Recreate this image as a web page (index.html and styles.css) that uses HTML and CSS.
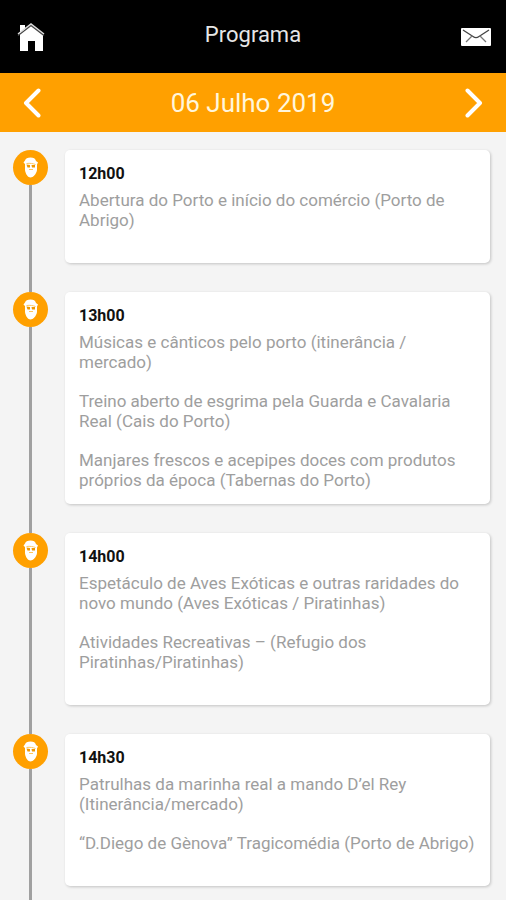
FILE: index.html
```html
<!DOCTYPE html>
<html lang="pt">
<head>
  <meta charset="UTF-8">
  <meta name="viewport" content="width=device-width, initial-scale=1.0">
  <title>Programa</title>
  <link rel="stylesheet" href="styles.css">
</head>
<body>

  <!-- head icon shared by all the timeline markers -->
  <svg class="sprite" aria-hidden="true">
    <symbol id="pirate" viewBox="0 0 35 35">
      <path d="M12 14 L10.500 12.500 L12 10.500 C12.500 8.500 14.500 7.500 17.500 7.500 C20.500 7.500 22.500 8.500 23 11 L25 12.500 L24 14.500 L24 20 C23.500 24 20 27.500 17.500 27.500 C15 27.500 12.500 24 12 20 Z" fill="#fff"/>
      <path d="M13.500 14.500 L17 15 L17 17.500 L14.500 17.500 Z M18.500 15 L22 15 L22 17.500 L19 17.500 Z" fill="#f09800"/>
      <path d="M13.500 13.500 C17 13 20 13.500 22.500 14.500" fill="none" stroke="#ffc65c" stroke-width="1"/>
      <path d="M16 19.500 L20 19.500" fill="none" stroke="#ffc65c" stroke-width="1"/>
    </symbol>
  </svg>

  <header class="topbar">
    <a href="#" class="icon-link" aria-label="Início">
      <svg width="28" height="30" viewBox="0 0 28 30">
        <path d="M3 3 H8 V8 L14 3 L26 13 V29 H18 V19 H11 V29 H3 Z" fill="#fff"/>
        <path d="M1 13.500 L14 3.500 L27 13.500" fill="none" stroke="#444" stroke-width="1.500"/>
        <path d="M1 12 L14 2 L27 12" fill="none" stroke="#ddd" stroke-width="1.500"/>
      </svg>
    </a>
    <h1>Programa</h1>
    <a href="#" class="icon-link" aria-label="Mensagens">
      <svg width="30" height="18" viewBox="0 0 30 18">
        <rect width="30" height="18" rx="1" fill="#fff"/>
        <path d="M2 2 L12 8.500 C14 10 16 10 18 8.500 L28 2" fill="none" stroke="#444" stroke-width="1.300"/>
        <path d="M11 8 L5 14 M19 8 L25 14" fill="none" stroke="#777" stroke-width="1.300"/>
      </svg>
    </a>
  </header>

  <nav class="datebar">
    <button type="button" class="arrow" aria-label="Dia anterior">
      <svg width="18" height="30" viewBox="0 0 18 30"><path d="M15.500 2.500 L3 15 L15.500 27.500"/></svg>
    </button>
    <h2>06 Julho 2019</h2>
    <button type="button" class="arrow" aria-label="Dia seguinte">
      <svg width="18" height="30" viewBox="0 0 18 30"><path d="M2.500 2.500 L15 15 L2.500 27.500"/></svg>
    </button>
  </nav>

  <main class="timeline">
    <section class="event">
      <div class="marker"><svg class="badge" aria-hidden="true"><use href="#pirate"/></svg></div>
      <article class="card">
        <h3>12h00</h3>
        <p>Abertura do Porto e início do comércio (Porto de Abrigo)</p>
      </article>
    </section>

    <section class="event">
      <div class="marker"><svg class="badge" aria-hidden="true"><use href="#pirate"/></svg></div>
      <article class="card compact">
        <h3>13h00</h3>
        <p>Músicas e cânticos pelo porto (itinerância / mercado)</p>
        <p>Treino aberto de esgrima pela Guarda e Cavalaria Real (Cais do Porto)</p>
        <p>Manjares frescos e acepipes doces com produtos próprios da época (Tabernas do Porto)</p>
      </article>
    </section>

    <section class="event">
      <div class="marker"><svg class="badge" aria-hidden="true"><use href="#pirate"/></svg></div>
      <article class="card">
        <h3>14h00</h3>
        <p>Espetáculo de Aves Exóticas e outras raridades do novo mundo (Aves Exóticas / Piratinhas)</p>
        <p>Atividades Recreativas – (Refugio dos Piratinhas/Piratinhas)</p>
      </article>
    </section>

    <section class="event">
      <div class="marker"><svg class="badge" aria-hidden="true"><use href="#pirate"/></svg></div>
      <article class="card">
        <h3>14h30</h3>
        <p>Patrulhas da marinha real a mando D’el Rey (Itinerância/mercado)</p>
        <p>“D.Diego de Gènova” Tragicomédia (Porto de Abrigo)</p>
      </article>
    </section>
  </main>

</body>
</html>
```
FILE: styles.css
```css
* {
  box-sizing: border-box;
}

body {
  margin: 0;
  font-family: Roboto, sans-serif;
  background: #f4f4f4;
  color: #111;
}

h1, h2, h3, p {
  margin: 0;
}

.sprite {
  display: none;
}

/* Top bar */
.topbar {
  display: flex;
  justify-content: space-between;
  align-items: center;
  height: 73px;
  padding: 0 15px 0 17px;
  background: #000;
}

.topbar h1 {
  padding-bottom: 4px;
  font-size: 22px;
  line-height: 28px;
  font-weight: 400;
  color: #e6e6e6;
}

.icon-link {
  display: flex;
}

/* Date selector */
.datebar {
  display: flex;
  justify-content: space-between;
  align-items: center;
  height: 59px;
  padding: 0 23px;
  background: #ffa000;
}

.datebar h2 {
  font-size: 26px;
  line-height: 32px;
  font-weight: 400;
  color: #fff6dc;
}

.arrow {
  display: flex;
  padding: 0;
  border: 0;
  background: none;
  cursor: pointer;
}

.arrow path {
  fill: none;
  stroke: #fff;
  stroke-width: 4;
  stroke-linecap: round;
  stroke-linejoin: round;
}

/* Timeline */
.timeline {
  padding: 18px 16px 0 13px;
}

.event {
  display: flex;
  gap: 17px;
}

.marker {
  display: flex;
  flex-direction: column;
  align-items: center;
  width: 35px;
  flex-shrink: 0;
}

.marker::after {
  content: "";
  flex: 1;
  width: 3px;
  background: #a0a0a0;
}

.badge {
  display: block;
  width: 35px;
  height: 35px;
  border-radius: 50%;
  background: #ffa000;
}

.card {
  flex: 1;
  margin-bottom: 29px;
  padding: 14px 14px 33px;
  border-radius: 5px;
  background: #fff;
  box-shadow: 1px 1px 3px rgba(0, 0, 0, 0.2);
}

.card.compact {
  padding-bottom: 14px;
}

.event:last-child .card {
  margin-bottom: 14px;
}

.card h3 {
  margin-bottom: 6px;
  font-size: 16px;
  line-height: 20px;
  font-weight: 700;
}

.card p {
  font-size: 17px;
  line-height: 20px;
  color: #9e9e9e;
}

.card p + p {
  margin-top: 19px;
}
```
